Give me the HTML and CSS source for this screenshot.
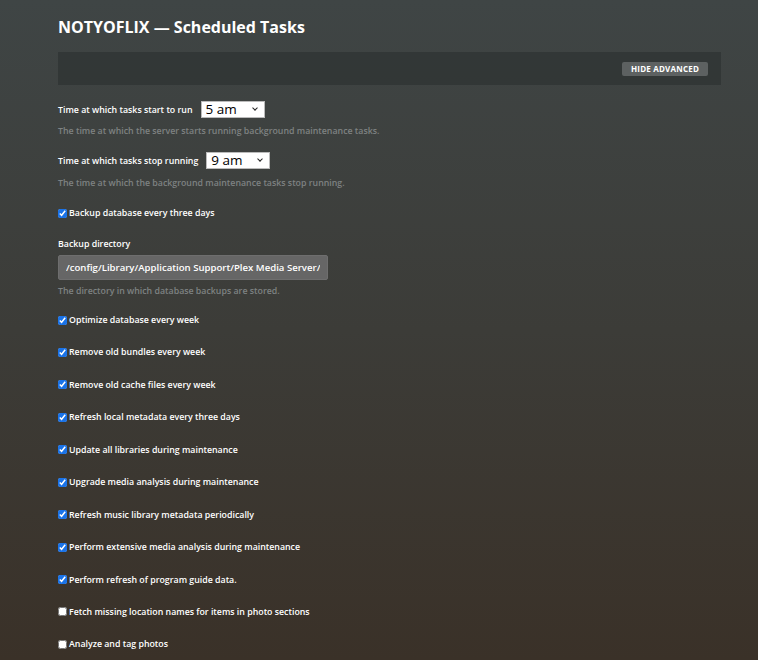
FILE: index.html
```html
<!DOCTYPE html>
<html lang="en">
<head>
<meta charset="UTF-8">
<title>NOTYOFLIX — Scheduled Tasks</title>
<link rel="stylesheet" href="styles.css">
</head>
<body>
<div class="page">
    <h1 class="page-title">NOTYOFLIX — Scheduled Tasks</h1>

    <div class="toolbar">
        <button class="btn-advanced">HIDE ADVANCED</button>
    </div>

    <div class="setting first">
        <div class="inline-row">
            <label class="label">Time at which tasks start to run</label>
            <span class="select-wrap">
                <select class="time-select">
                    <option>5 am</option>
                </select>
            </span>
        </div>
        <p class="help">The time at which the server starts running background maintenance tasks.</p>
    </div>

    <div class="setting stop">
        <div class="inline-row">
            <label class="label">Time at which tasks stop running</label>
            <span class="select-wrap">
                <select class="time-select">
                    <option>9 am</option>
                </select>
            </span>
        </div>
        <p class="help">The time at which the background maintenance tasks stop running.</p>
    </div>

    <div class="setting backup">
        <label class="check"><input type="checkbox" checked> Backup database every three days</label>
    </div>

    <div class="setting directory">
        <label class="label block">Backup directory</label>
        <input class="text-input" type="text" value="/config/Library/Application Support/Plex Media Server/Plug-in Support/Databases">
        <p class="help">The directory in which database backups are stored.</p>
    </div>

    <div class="check-list">
        <label class="check"><input type="checkbox" checked> Optimize database every week</label>
        <label class="check"><input type="checkbox" checked> Remove old bundles every week</label>
        <label class="check"><input type="checkbox" checked> Remove old cache files every week</label>
        <label class="check"><input type="checkbox" checked> Refresh local metadata every three days</label>
        <label class="check"><input type="checkbox" checked> Update all libraries during maintenance</label>
        <label class="check"><input type="checkbox" checked> Upgrade media analysis during maintenance</label>
        <label class="check"><input type="checkbox" checked> Refresh music library metadata periodically</label>
        <label class="check"><input type="checkbox" checked> Perform extensive media analysis during maintenance</label>
        <label class="check"><input type="checkbox" checked> Perform refresh of program guide data.</label>
        <label class="check"><input type="checkbox"> Fetch missing location names for items in photo sections</label>
        <label class="check"><input type="checkbox"> Analyze and tag photos</label>
    </div>
</div>
</body>
</html>
```

FILE: styles.css
```css
* {
    margin: 0;
    padding: 0;
    box-sizing: border-box;
}
html, body {
    height: 100%;
}
body {
    font-family: "Open Sans", "Liberation Sans", sans-serif;
    color: #eee;
    background: linear-gradient(180deg, #3f4545 0%, #3c3c38 50%, #3a3128 100%);
    overflow: hidden;
}
.page {
    padding: 15px 37px 0 58px;
}
.page-title {
    font-size: 16px;
    font-weight: 700;
    color: #fff;
    line-height: 24px;
}
.toolbar {
    display: flex;
    justify-content: flex-end;
    align-items: center;
    margin-top: 13px;
    height: 33px;
    padding-right: 13px;
    background-color: rgba(40, 46, 46, 0.55);
}
.btn-advanced {
    font-family: inherit;
    font-size: 8px;
    font-weight: 700;
    color: #fff;
    background-color: #5d6161;
    border: none;
    border-radius: 2px;
    padding: 0 9px;
    height: 14px;
    letter-spacing: 0.2px;
}
.setting {
    margin-top: 15px;
}
.setting.first {
    margin-top: 16px;
}
.setting.first .help {
    margin-top: 7px;
}
.setting.stop {
    margin-top: 15px;
}
.setting.stop .help {
    margin-top: 8px;
}
.setting.backup {
    margin-top: 17px;
}
.setting.directory {
    margin-top: 18px;
}
.inline-row {
    display: flex;
    align-items: center;
}
.label {
    font-size: 8.8px;
    font-weight: 600;
    color: #fff;
}
.label.block {
    display: block;
    margin-bottom: 5px;
}
.select-wrap {
    position: relative;
    margin-left: 8px;
}
.select-wrap::after {
    content: "";
    position: absolute;
    right: 8px;
    top: 5px;
    width: 3px;
    height: 3px;
    border-right: 1.5px solid #222;
    border-bottom: 1.5px solid #222;
    transform: rotate(45deg);
    pointer-events: none;
}
.time-select {
    display: block;
    appearance: none;
    -webkit-appearance: none;
    width: 64px;
    height: 17px;
    padding: 0 0 0 4px;
    font-family: inherit;
    font-size: 13.5px;
    line-height: 15px;
    color: #000;
    background-color: #fff;
    border: 1px solid #bbb;
    border-radius: 0;
}
.help {
    margin-top: 6px;
    font-size: 8.8px;
    font-weight: 600;
    color: #7e8282;
}
.directory .help {
    margin-top: 5px;
}
.check {
    display: flex;
    align-items: center;
    font-size: 8.8px;
    font-weight: 600;
    color: #fff;
    height: 14px;
}
.check input {
    width: 9px;
    height: 9px;
    margin-right: 2px;
    accent-color: #1a73e8;
}
.text-input {
    display: block;
    width: 270px;
    height: 25px;
    padding: 0 7px;
    font-family: inherit;
    font-size: 9.6px;
    font-weight: 600;
    color: #fff;
    background-color: #666;
    border: 1px solid #6e6e6e;
    border-radius: 2px;
    overflow: hidden;
}
.check-list {
    display: flex;
    flex-direction: column;
    gap: 18.45px;
    margin-top: 16px;
}
```
